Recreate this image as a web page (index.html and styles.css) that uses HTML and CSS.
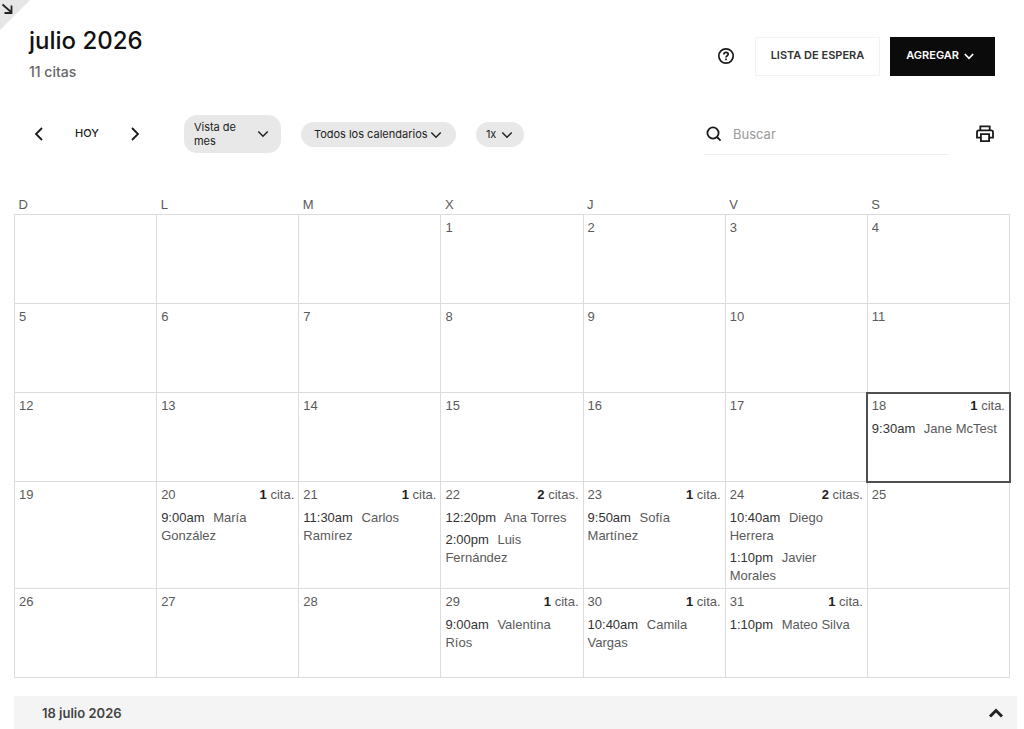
FILE: index.html
```html
<!DOCTYPE html>
<html lang="es">
<head>
<meta charset="utf-8">
<meta name="viewport" content="width=device-width, initial-scale=1">
<title>julio 2026</title>
<link rel="stylesheet" href="styles.css">
</head>
<body>
<button class="corner" type="button" aria-label="Expandir">
  <svg width="14" height="14" viewBox="0 0 14 14" fill="none" stroke="currentColor" stroke-width="1.8"><path d="M1.5 2.5 10 10M3.5 11H10.5V3.5"/></svg>
</button>
<div class="page">
  <header class="header">
    <div class="heading">
      <h1 class="title">julio 2026</h1>
      <p class="subtitle">11 citas</p>
    </div>
    <div class="actions">
      <button class="icon-button" type="button" aria-label="Ayuda">
        <svg width="18" height="18" viewBox="0 0 18 18" fill="none" stroke="currentColor" stroke-width="1.7"><circle cx="9" cy="9" r="7.2"/><path d="M6.9 7.5C6.9 6.1 7.8 5.4 9 5.4S11.2 6.1 11.2 7.3C11.2 8.8 9 8.8 9 10.6M9 11.5V13.2"/></svg>
      </button>
      <button class="button" type="button">LISTA DE ESPERA</button>
      <button class="button button-dark" type="button">AGREGAR
        <svg class="chevron-low" width="10" height="7" viewBox="0 0 10 7" fill="none" stroke="currentColor" stroke-width="1.7"><path d="M.8 1 5 5.3 9.2 1"/></svg>
      </button>
    </div>
  </header>

  <div class="toolbar">
    <nav class="pager" aria-label="Mes">
      <button class="icon-button" type="button" aria-label="Anterior">
        <svg width="10" height="14" viewBox="0 0 10 14" fill="none" stroke="currentColor" stroke-width="1.8"><path d="M8 1 2 7 8 13"/></svg>
      </button>
      <button class="today" type="button">HOY</button>
      <button class="icon-button" type="button" aria-label="Siguiente">
        <svg width="10" height="14" viewBox="0 0 10 14" fill="none" stroke="currentColor" stroke-width="1.8"><path d="M2 1 8 7 2 13"/></svg>
      </button>
    </nav>
    <div class="filters">
      <button class="pill pill-view" type="button" aria-haspopup="listbox">
        <span class="pill-label">Vista de mes</span>
        <svg width="12" height="8" viewBox="0 0 12 8" fill="none" stroke="currentColor" stroke-width="1.5"><path d="M1.3 1.5 6 6.2 10.7 1.5"/></svg>
      </button>
      <div class="picker">
        <select class="pill pill-calendars" aria-label="Calendarios"><option>Todos los calendarios</option></select>
        <svg class="picker-icon" width="12" height="8" viewBox="0 0 12 8" fill="none" stroke="currentColor" stroke-width="1.5"><path d="M1.3 1.5 6 6.2 10.7 1.5"/></svg>
      </div>
      <div class="picker">
        <select class="pill pill-zoom" aria-label="Zoom"><option>1x</option></select>
        <svg class="picker-icon" width="12" height="8" viewBox="0 0 12 8" fill="none" stroke="currentColor" stroke-width="1.5"><path d="M1.3 1.5 6 6.2 10.7 1.5"/></svg>
      </div>
    </div>
    <div class="tools">
      <label class="search">
        <svg width="16" height="16" viewBox="0 0 16 16" fill="none" stroke="currentColor" stroke-width="1.8"><circle cx="7" cy="7" r="5.6"/><path d="M11 11 14.6 14.6"/></svg>
        <input class="search-input" type="search" placeholder="Buscar" aria-label="Buscar">
      </label>
      <button class="icon-button" type="button" aria-label="Imprimir">
        <svg width="20" height="18" viewBox="0 0 20 18" fill="none" stroke="currentColor" stroke-width="1.8"><path d="M5.3 5V1.4H14.7V5M5.3 12.6H2V7.2Q2 5.3 3.9 5.3H16.1Q18 5.3 18 7.2V12.6H14.7"/><path d="M5.9 9.2H14.1V16.2H5.9Z"/></svg>
      </button>
    </div>
  </div>

  <table class="calendar">
    <thead>
      <tr><th scope="col">D</th><th scope="col">L</th><th scope="col">M</th><th scope="col">X</th><th scope="col">J</th><th scope="col">V</th><th scope="col">S</th></tr>
    </thead>
    <tbody>
      <tr>
        <td></td><td></td><td></td>
        <td><div class="day">1</div></td>
        <td><div class="day">2</div></td>
        <td><div class="day">3</div></td>
        <td><div class="day">4</div></td>
      </tr>
      <tr>
        <td><div class="day">5</div></td>
        <td><div class="day">6</div></td>
        <td><div class="day">7</div></td>
        <td><div class="day">8</div></td>
        <td><div class="day">9</div></td>
        <td><div class="day">10</div></td>
        <td><div class="day">11</div></td>
      </tr>
      <tr>
        <td><div class="day">12</div></td>
        <td><div class="day">13</div></td>
        <td><div class="day">14</div></td>
        <td><div class="day">15</div></td>
        <td><div class="day">16</div></td>
        <td><div class="day">17</div></td>
        <td class="selected"><div class="day">18 <span><b>1</b> cita.</span></div>
          <div class="event"><span class="time">9:30am</span> Jane McTest</div></td>
      </tr>
      <tr>
        <td><div class="day">19</div></td>
        <td><div class="day">20 <span><b>1</b> cita.</span></div>
          <div class="event"><span class="time">9:00am</span> María González</div></td>
        <td><div class="day">21 <span><b>1</b> cita.</span></div>
          <div class="event"><span class="time">11:30am</span> Carlos Ramírez</div></td>
        <td><div class="day">22 <span><b>2</b> citas.</span></div>
          <div class="event"><span class="time">12:20pm</span> Ana Torres</div>
          <div class="event"><span class="time">2:00pm</span> Luis Fernández</div></td>
        <td><div class="day">23 <span><b>1</b> cita.</span></div>
          <div class="event"><span class="time">9:50am</span> Sofía Martínez</div></td>
        <td><div class="day">24 <span><b>2</b> citas.</span></div>
          <div class="event"><span class="time">10:40am</span> Diego Herrera</div>
          <div class="event"><span class="time">1:10pm</span> Javier Morales</div></td>
        <td><div class="day">25</div></td>
      </tr>
      <tr>
        <td><div class="day">26</div></td>
        <td><div class="day">27</div></td>
        <td><div class="day">28</div></td>
        <td><div class="day">29 <span><b>1</b> cita.</span></div>
          <div class="event"><span class="time">9:00am</span> Valentina Ríos</div></td>
        <td><div class="day">30 <span><b>1</b> cita.</span></div>
          <div class="event"><span class="time">10:40am</span> Camila Vargas</div></td>
        <td><div class="day">31 <span><b>1</b> cita.</span></div>
          <div class="event"><span class="time">1:10pm</span> Mateo Silva</div></td>
        <td></td>
      </tr>
    </tbody>
  </table>

  <button class="day-bar" type="button" aria-expanded="false">
    <span>18 julio 2026</span>
    <svg width="16" height="10" viewBox="0 0 16 10" fill="none" stroke="#222" stroke-width="3"><path d="M2 8.5 8 2.5 14 8.5"/></svg>
  </button>
</div>
</body>
</html>
```
FILE: styles.css
```css
* { box-sizing: border-box; }

body {
  margin: 0;
  background: #fff;
  color: #222;
  font: 13px/18px Inter, "Liberation Sans", sans-serif;
}

button, input, select {
  margin: 0;
  padding: 0;
  border: 0;
  background: none;
  color: inherit;
  font: inherit;
}

svg { display: block; flex: none; }

.corner {
  position: absolute;
  top: 0;
  left: 0;
  width: 30px;
  height: 30px;
  padding: 2px 1px;
  display: flex;
  background: #e6e6e6;
  clip-path: polygon(0 0, 100% 0, 0 100%);
}

.page { padding: 24px 7px 0 14px; }

.header {
  display: flex;
  justify-content: space-between;
  padding: 0 22px 0 15px;
}

.title {
  margin: 0;
  color: #111;
  font-size: 24px;
  line-height: 34px;
  font-weight: 500;
}

.subtitle {
  margin: 5px 0 0;
  color: #666;
  font-size: 14px;
  font-weight: 500;
}

.actions {
  display: flex;
  align-items: center;
  gap: 10px;
  height: 64px;
}

.icon-button { color: #1a1a1a; }
.actions .icon-button { margin-right: 10px; }

.button {
  display: flex;
  align-items: center;
  justify-content: center;
  gap: 5px;
  height: 39px;
  padding: 0 15px 3px;
  border: 1px solid #f2f2f2;
  color: #333;
  font-size: 11px;
  font-weight: 600;
}

.button-dark {
  padding-right: 20px;
  border-color: #0b0b0b;
  background: #0b0b0b;
  color: #fff;
}

.chevron-low { margin-top: 4px; }

.toolbar {
  display: flex;
  align-items: center;
  height: 42px;
  margin-top: 25px;
  padding: 0 22px 0 20px;
}

.pager {
  display: flex;
  align-items: center;
  gap: 31px;
}

.today {
  padding-bottom: 3px;
  font-size: 11px;
  font-weight: 500;
}

.filters {
  display: flex;
  align-items: center;
  gap: 20px;
  margin-left: 44px;
}

.pill {
  border-radius: 13px;
  background: #e8e8e8;
  color: #222;
  font-size: 11px;
  line-height: 14px;
  appearance: none;
}

.pill-view {
  display: flex;
  align-items: center;
  justify-content: space-between;
  width: 97px;
  height: 38px;
  padding: 0 12px 0 10px;
  text-align: left;
}

.pill-label { width: 50px; }

.picker { position: relative; }
.pill-calendars { height: 25px; padding: 0 28px 0 13px; }
.pill-zoom { height: 25px; padding: 0 27px 0 10px; }

.picker-icon {
  position: absolute;
  top: 9px;
  right: 14px;
  pointer-events: none;
}

.pill-zoom + .picker-icon { right: 11px; }

.tools {
  display: flex;
  align-items: center;
  gap: 26px;
  margin-left: auto;
}

.search {
  display: flex;
  align-items: center;
  gap: 11px;
  width: 245px;
  height: 42px;
  padding-left: 2px;
  border-bottom: 1px solid #f0f0f0;
  color: #1a1a1a;
}

.search-input { flex: 1; min-width: 0; outline: 0; }
.search-input::placeholder { color: #999; opacity: 1; }

.calendar {
  width: calc(100% - 7px);
  margin-top: 41px;
  border-collapse: collapse;
  table-layout: fixed;
  color: #5a5a5a;
  font-family: "Liberation Sans", sans-serif;
}

.calendar th {
  padding: 0 4px;
  font-weight: 400;
  text-align: left;
}

.calendar td {
  height: 89px;
  padding: 4px 4px 3px;
  border: 1px solid #dcdcdc;
  vertical-align: top;
}

.calendar .selected { outline: 2px solid #505050; outline-offset: -1px; }

.day { display: flex; justify-content: space-between; }
.day b { color: #222; font-weight: 700; }

.event { margin-top: 4px; }
.day + .event { margin-top: 5px; }
.time { margin-right: 5px; color: #333; }

.day-bar {
  display: flex;
  align-items: center;
  justify-content: space-between;
  width: 100%;
  height: 33px;
  margin-top: 18px;
  padding: 1px 13px 0 28px;
  background: #f4f4f4;
  color: #444;
  font-weight: 600;
}
```
